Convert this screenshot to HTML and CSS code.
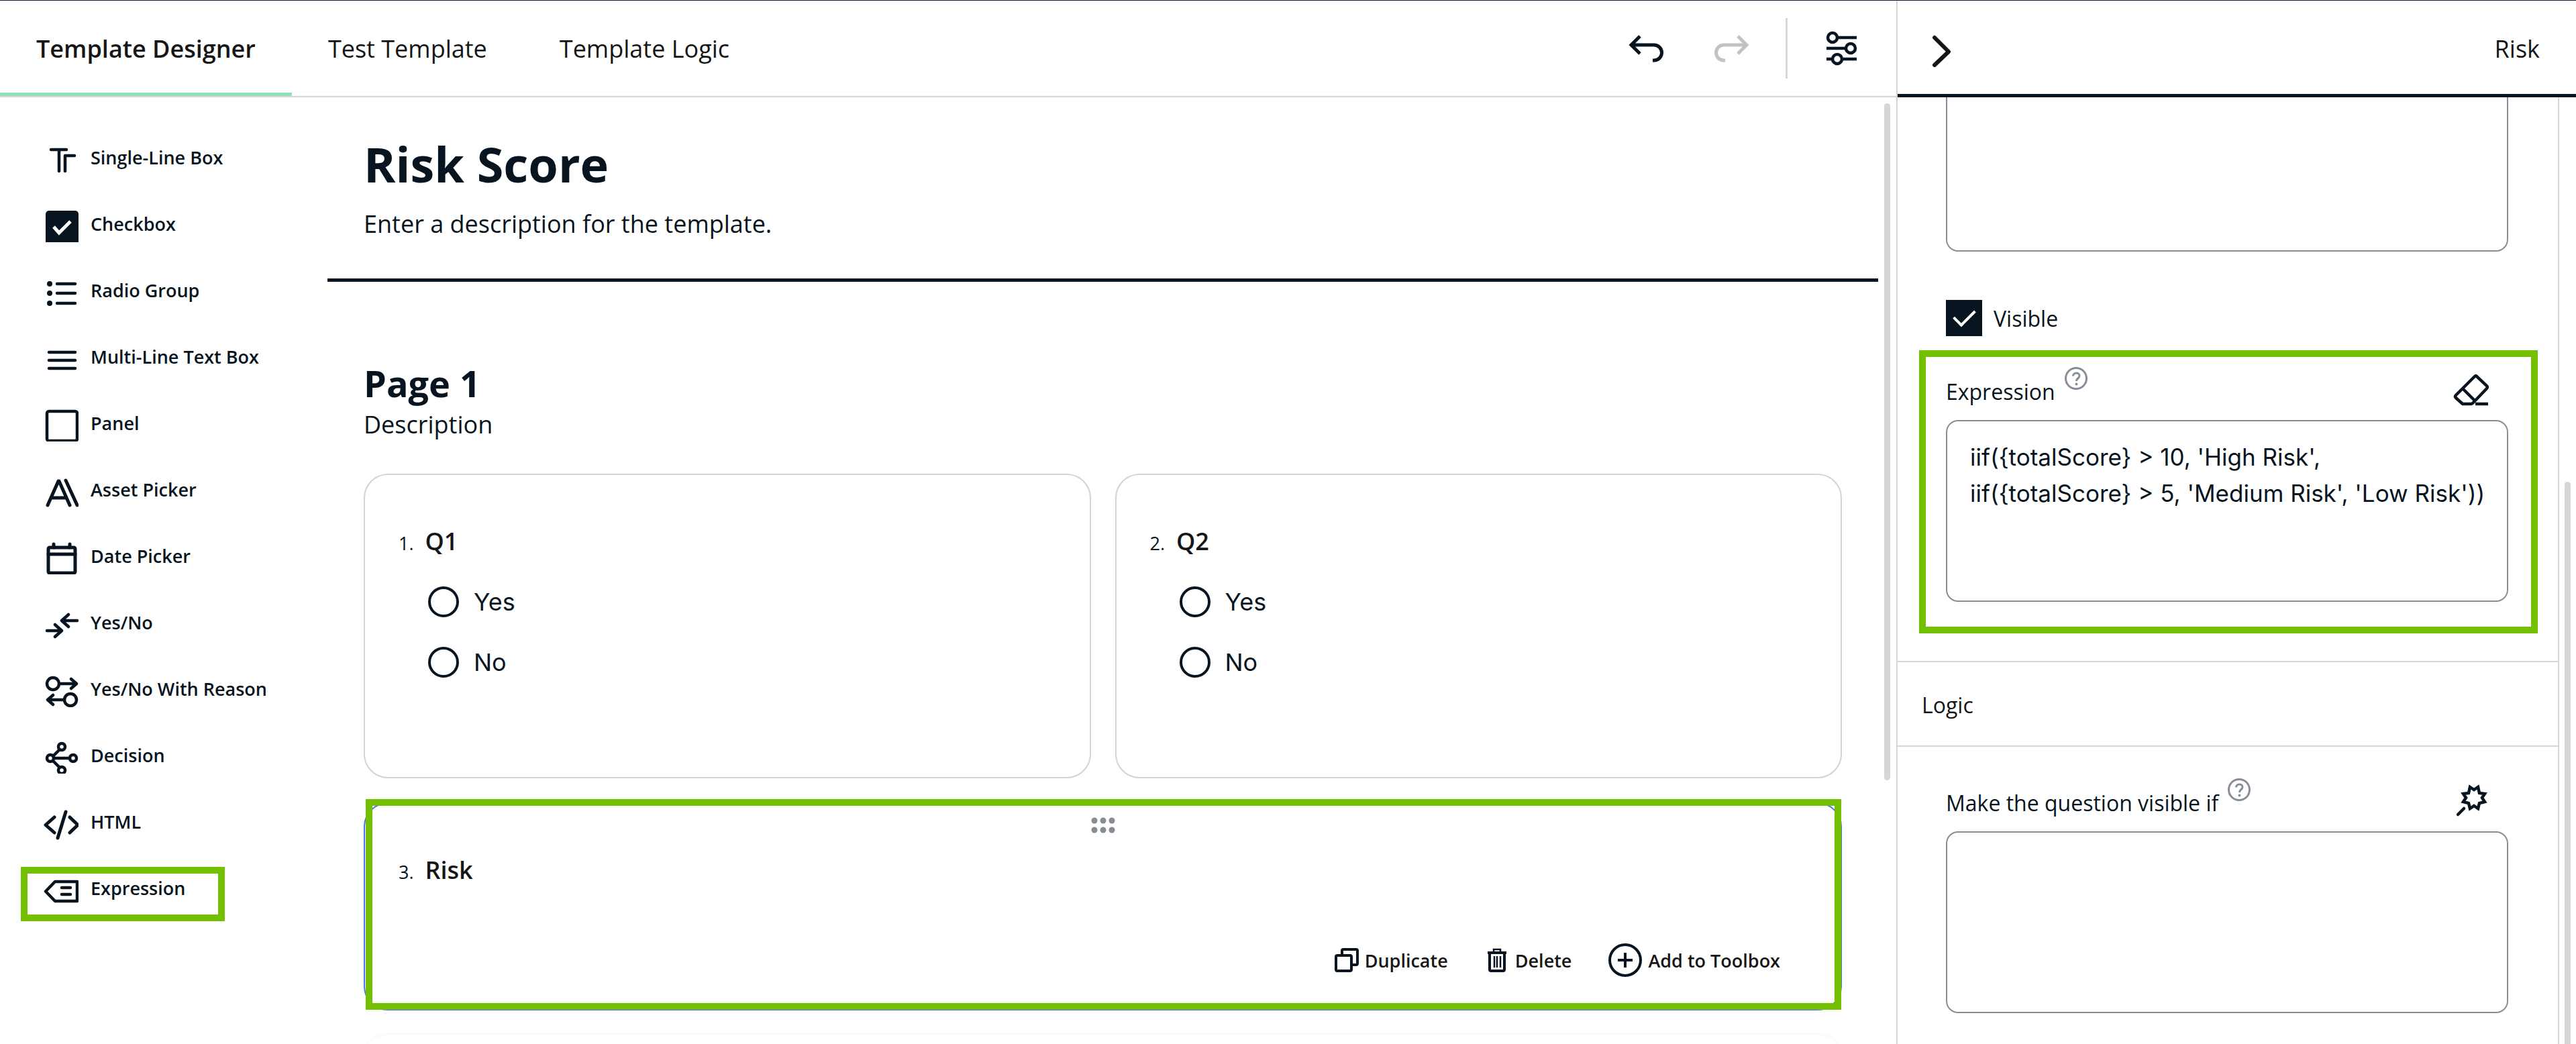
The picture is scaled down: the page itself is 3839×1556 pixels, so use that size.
FILE: index.html
```html
<!DOCTYPE html>
<html lang="en">
<head>
    <meta charset="UTF-8">
    <meta name="viewport" content="width=device-width, initial-scale=1.0">
    <title>Template Designer</title>
    <link rel="stylesheet" href="styles.css">
</head>
<body>
    <div class="designer">
        <header class="topbar">
            <nav class="tabs">
                <a class="tab active" href="#designer">Template Designer</a>
                <a class="tab" href="#test">Test Template</a>
                <a class="tab" href="#logic">Template Logic</a>
            </nav>
            <div class="tools">
                <button class="tool" aria-label="Undo">
                    <svg class="icon" viewBox="0 0 54 54"><path d="M17 9 4 22l13 13M4 22h34a11.5 11.5 0 0 1 0 23h-2" stroke-width="5"/></svg>
                </button>
                <button class="tool" aria-label="Redo" disabled>
                    <svg class="icon" viewBox="0 0 54 54"><path d="M37 9l13 13-13 13M50 22H16a11.5 11.5 0 0 0 0 23h2" stroke-width="5"/></svg>
                </button>
                <span class="divider"></span>
                <button class="tool" aria-label="Settings">
                    <svg class="icon" viewBox="0 0 54 54"><circle cx="13" cy="11" r="7"/><path d="M21 11h28M4 27h28M4 43h8M29 43h20"/><circle cx="40" cy="27" r="7"/><circle cx="20" cy="43" r="7"/></svg>
                </button>
            </div>
        </header>

        <div class="workspace">
            <aside class="toolbox">
                <button class="item">
                    <svg class="icon round" viewBox="0 0 54 54"><path d="M13 15h23M25 15v32M48 24H34v23"/></svg>
                    Single-Line Box
                </button>
                <button class="item">
                    <svg class="icon" viewBox="0 0 54 54"><rect class="solid" x="5" y="7" width="49" height="51" rx="5"/><path class="check" d="M17 31l8 9 17-17"/></svg>
                    Checkbox
                </button>
                <button class="item">
                    <svg class="icon round" viewBox="0 0 54 54"><path d="M22 17h27M22 31h27M22 46h27"/><circle class="solid" cx="11" cy="17" r="4"/><circle class="solid" cx="11" cy="31" r="4"/><circle class="solid" cx="11" cy="46" r="4"/></svg>
                    Radio Group
                </button>
                <button class="item">
                    <svg class="icon round" viewBox="0 0 54 54"><path d="M10 20h39M10 32h39M10 44h39"/></svg>
                    Multi-Line Text Box
                </button>
                <button class="item">
                    <svg class="icon" viewBox="0 0 54 54"><rect x="7" y="9" width="45" height="44" rx="3"/></svg>
                    Panel
                </button>
                <button class="item">
                    <svg class="icon round" viewBox="0 0 54 54"><path d="M8 50 24 14h1l16 36M15 39h20M35 13l17 37" stroke-width="5"/></svg>
                    Asset Picker
                </button>
                <button class="item">
                    <svg class="icon round" viewBox="0 0 54 54"><rect x="9" y="14" width="40" height="38" rx="2" stroke-width="5"/><path d="M9 24h40M17 9v5M41 9v5" stroke-width="5"/></svg>
                    Date Picker
                </button>
                <button class="item">
                    <svg class="icon round" viewBox="0 0 54 54"><path d="M52 24H29M39 15l-10 9 10 9M7 39h22M19 30l10 9-10 9"/></svg>
                    Yes/No
                </button>
                <button class="item">
                    <svg class="icon round" viewBox="0 0 54 54"><circle cx="16" cy="19" r="9"/><path d="M26 19h25M43 12l8 7-8 7M32 43H8M16 36l-8 7 8 7"/><circle cx="42" cy="43" r="9"/></svg>
                    Yes/No With Reason
                </button>
                <button class="item">
                    <svg class="icon round" viewBox="0 0 54 54"><circle cx="29" cy="14" r="5"/><circle cx="12" cy="31" r="5"/><circle cx="46" cy="31" r="5"/><circle cx="29" cy="49" r="5"/><path d="M16 28l9-9M17 31h24M16 35l9 9"/></svg>
                    Decision
                </button>
                <button class="item">
                    <svg class="icon round" viewBox="0 0 54 54"><path d="M18 20 5 31.500l13 11.500M41 20l12 11.500L41 43M35 12 23 51" stroke-width="5"/></svg>
                    HTML
                </button>
                <button class="item">
                    <svg class="icon round" viewBox="0 0 54 54"><path d="M5 31.500 19 17h33v29H19zM29 26h13M29 36h13"/></svg>
                    Expression
                    <span class="highlight highlight-item"></span>
                </button>
            </aside>

            <main class="canvas">
                <section class="template-head">
                    <h1>Risk Score</h1>
                    <p>Enter a description for the template.</p>
                </section>

                <section class="page">
                    <h2>Page 1</h2>
                    <p>Description</p>

                    <div class="questions">
                        <fieldset class="card">
                            <div class="question"><span class="number">1.</span>Q1</div>
                            <div class="choices">
                                <label class="choice"><input type="radio" name="q1">Yes</label>
                                <label class="choice"><input type="radio" name="q1">No</label>
                            </div>
                        </fieldset>
                        <fieldset class="card">
                            <div class="question"><span class="number">2.</span>Q2</div>
                            <div class="choices">
                                <label class="choice"><input type="radio" name="q2">Yes</label>
                                <label class="choice"><input type="radio" name="q2">No</label>
                            </div>
                        </fieldset>
                        <div class="card selected">
                            <svg class="drag" viewBox="0 0 36 24"><circle cx="5" cy="5" r="4.500"/><circle cx="18" cy="5" r="4.500"/><circle cx="31" cy="5" r="4.500"/><circle cx="5" cy="19" r="4.500"/><circle cx="18" cy="19" r="4.500"/><circle cx="31" cy="19" r="4.500"/></svg>
                            <div class="question"><span class="number">3.</span>Risk</div>
                            <div class="actions">
                                <button class="action">
                                    <svg class="icon small" viewBox="0 0 36 36"><rect x="2" y="11" width="23" height="23" rx="2"/><path d="M11 10V4q0-2 2-2h19q2 0 2 2v19q0 2-2 2h-6"/></svg>
                                    Duplicate
                                </button>
                                <button class="action">
                                    <svg class="icon small" viewBox="0 0 36 36"><path d="M4 7h28M7 8v24q0 2 2 2h18q2 0 2-2V8"/><path d="M13 6V2h10v4M14 12v17M18 12v17M23 12v17" stroke-width="2.500"/></svg>
                                    Delete
                                </button>
                                <button class="action">
                                    <svg class="icon medium" viewBox="0 0 50 50"><circle cx="25" cy="25" r="23"/><path d="M14 25h22M25 14v22"/></svg>
                                    Add to Toolbox
                                </button>
                            </div>
                            <span class="highlight highlight-card"></span>
                        </div>
                        <div class="card ghost"></div>
                    </div>
                </section>
            </main>
            <div class="scroll"><span class="thumb"></span></div>
        </div>
    </div>

    <aside class="properties">
        <header class="properties-head">
            <button class="tool" aria-label="Collapse">
                <svg class="icon round chevron" viewBox="0 0 54 54"><path d="M17 10l21 21-21 20" stroke-width="6"/></svg>
            </button>
            <span>Risk</span>
        </header>
        <div class="properties-body">
            <div class="fields">
                <div class="group">
                    <textarea class="cut" aria-label="Description"></textarea>
                    <label class="visible"><input type="checkbox" checked>Visible</label>
                </div>
                <div class="group expression">
                    <div class="field-head">
                        <label for="expression">Expression</label>
                        <svg class="help" viewBox="0 0 34 34"><circle cx="17" cy="17" r="15.500"/><path d="M12.500 13.500c0-6 9.500-6 9.500-.5 0 4-4.500 3.500-4.500 8"/><circle class="dot" cx="17.500" cy="25.500" r="2"/></svg>
                        <button class="tool" aria-label="Clear expression">
                            <svg class="icon" viewBox="0 0 54 54"><path d="M32 5q2-2 3 0l15 14q2 2 0 4L29 45l-2 1H14L4 37q-2-2 0-4zM15 24l16 16M33 46h19"/></svg>
                        </button>
                    </div>
                    <textarea id="expression">iif({totalScore} &gt; 10, 'High Risk',
iif({totalScore} &gt; 5, 'Medium Risk', 'Low Risk'))</textarea>
                    <span class="highlight highlight-field"></span>
                </div>
                <button class="section">Logic</button>
                <div class="group">
                    <div class="field-head">
                        <label for="visible-if">Make the question visible if</label>
                        <svg class="help" viewBox="0 0 34 34"><circle cx="17" cy="17" r="15.500"/><path d="M12.500 13.500c0-6 9.500-6 9.500-.5 0 4-4.500 3.500-4.500 8"/><circle class="dot" cx="17.500" cy="25.500" r="2"/></svg>
                        <button class="tool" aria-label="Edit condition">
                            <svg class="icon" viewBox="0 0 54 54"><path d="M25 4 31 8 37 4 39 13 47 14 43 20 47 26 39 28 37 36 31 32 25 36 23 28 15 26 19 20 15 14 23 13z"/><path d="M16 36 7 45" stroke-linecap="round"/></svg>
                        </button>
                    </div>
                    <textarea id="visible-if"></textarea>
                </div>
            </div>
            <div class="scroll side"><span class="thumb"></span></div>
        </div>
    </aside>
</body>
</html>
```

FILE: styles.css
```css
* {
    box-sizing: border-box;
}

body {
    display: grid;
    grid-template-columns: 2826fr 1013fr;
    height: 100vh;
    margin: 0;
    border-top: 1px solid #0f1b33;
    overflow: hidden;
    background: #fff;
    color: #081521;
    font-family: "Open Sans", sans-serif;
    font-size: 36px;
}

h1, h2, p {
    margin: 0;
}

button {
    padding: 0;
    border: none;
    background: none;
    color: inherit;
    font: inherit;
    cursor: pointer;
}

.icon {
    flex: none;
    width: 54px;
    height: 54px;
    fill: none;
    stroke: #081521;
    stroke-width: 4.5;
}

.icon.small {
    width: 36px;
    height: 36px;
    stroke-width: 4;
}

.icon.medium {
    width: 50px;
    height: 50px;
    stroke-width: 4;
}

.round {
    stroke-linecap: round;
    stroke-linejoin: round;
}

.solid {
    fill: #081521;
    stroke: none;
}

.check {
    stroke: #fff;
    stroke-width: 5;
}

.highlight {
    position: absolute;
    border: 10px solid #72c000;
    pointer-events: none;
}

/* Left side: tabs, toolbox, canvas */

.designer {
    display: flex;
    flex-direction: column;
    min-width: 0;
    min-height: 0;
}

.topbar {
    display: flex;
    justify-content: space-between;
    flex: none;
    height: 144px;
    border-bottom: 2px solid #d6d6d6;
}

.tabs {
    display: flex;
    gap: 108px;
    padding-left: 54px;
    color: #161616;
}

.tab {
    position: relative;
    color: inherit;
    line-height: 144px;
    text-decoration: none;
}

.tab.active {
    font-weight: 600;
}

.tab.active::after {
    content: "";
    position: absolute;
    right: -54px;
    bottom: 0;
    left: -54px;
    height: 5px;
    background: #93e0b5;
}

.tools {
    display: flex;
    align-items: center;
    gap: 72px;
    padding-right: 54px;
}

.tool {
    display: flex;
}

.tool:disabled {
    opacity: 0.25;
}

.divider {
    width: 3px;
    height: 90px;
    margin: 0 -18px;
    background: #d6d6d6;
}

.workspace {
    display: flex;
    flex: 1;
    min-height: 0;
}

.toolbox {
    flex: none;
    width: 488px;
    padding: 40px 0 0 63px;
}

.item {
    position: relative;
    display: flex;
    align-items: center;
    gap: 18px;
    width: 100%;
    height: 99px;
    font-size: 27px;
    font-weight: 600;
}

.highlight-item {
    top: 18px;
    right: 153px;
    bottom: 0;
    left: -32px;
}

.canvas {
    flex: 1;
    min-width: 0;
    overflow: hidden;
}

.template-head {
    padding: 50px 54px 54px;
    border-bottom: 5px solid #081521;
}

.template-head h1 {
    margin-bottom: 14px;
    font-size: 72px;
    line-height: 98px;
}

.template-head p {
    line-height: 54px;
}

.page {
    padding: 115px 54px 0;
}

.page h2 {
    font-size: 54px;
    line-height: 72px;
}

.page p {
    line-height: 52px;
}

.questions {
    display: grid;
    grid-template-columns: 1fr 1fr;
    gap: 36px;
    margin-top: 47px;
}

.card {
    position: relative;
    min-width: 0;
    margin: 0;
    padding: 72px 90px 126px 50px;
    border: 2px solid #d0d3d8;
    border-radius: 36px;
}

.question {
    display: flex;
    align-items: baseline;
    gap: 17px;
    color: #161616;
    font-weight: 600;
    line-height: 54px;
}

.number {
    color: #081521;
    font-size: 27px;
    font-weight: 400;
}

.choices {
    padding: 15px 0 0 44px;
}

.choice {
    display: flex;
    align-items: center;
    gap: 22px;
    height: 90px;
    font-family: Inter, sans-serif;
}

.choice input {
    appearance: none;
    width: 46px;
    height: 46px;
    margin: 0;
    border: 4px solid #081521;
    border-radius: 50%;
}

.card.selected {
    grid-column: 1 / -1;
    padding-bottom: 48px;
    border-color: #4d6ff5;
}

.drag {
    position: absolute;
    top: 20px;
    left: calc(50% - 18px);
    width: 36px;
    height: 24px;
    fill: #858c94;
}

.actions {
    display: flex;
    justify-content: flex-end;
    gap: 55px;
    margin-top: 79px;
    color: #161616;
    font-size: 27px;
    font-weight: 600;
}

.action {
    display: flex;
    align-items: center;
    gap: 9px;
    height: 50px;
}

.highlight-card {
    inset: -7px -1px -1px 1px;
}

.card.ghost {
    grid-column: 1 / -1;
    border: none;
    box-shadow: 0 0 5px rgba(0, 0, 0, 0.06);
}

.scroll {
    flex: none;
    width: 27px;
    padding: 9px 9px 0;
}

.thumb {
    display: block;
    height: 72%;
    border-radius: 5px;
    background: #d6d6d6;
}

/* Right side: question properties */

.properties {
    display: flex;
    flex-direction: column;
    min-width: 0;
    min-height: 0;
    border-left: 2px solid #d6d6d6;
}

.properties-head {
    display: flex;
    align-items: center;
    justify-content: space-between;
    flex: none;
    height: 144px;
    padding: 4px 54px 0 38px;
    border-bottom: 5px solid #081521;
    color: #161616;
}

.chevron {
    stroke: #161616;
}

.properties-body {
    display: flex;
    flex: 1;
    min-height: 0;
}

.fields {
    flex: 1;
    min-width: 0;
    overflow: hidden;
    border-right: 2px solid #d6d6d6;
    font-size: 32px;
}

.group {
    position: relative;
    padding: 0 74px 0 72px;
}

textarea {
    display: block;
    width: 100%;
    height: 271px;
    padding: 26px 20px 26px 34px;
    border: 2px solid #868f98;
    border-radius: 18px;
    background: #fff;
    color: #081521;
    font: 35px/54px Inter, sans-serif;
    white-space: pre;
    overflow: hidden;
    resize: none;
}

/* scrolled halfway under the panel header */
textarea.cut {
    height: 230px;
    border-top: none;
    border-radius: 0 0 18px 18px;
}

.visible {
    display: flex;
    align-items: center;
    gap: 17px;
    margin: 72px 0 39px;
}

.visible input {
    appearance: none;
    display: grid;
    place-items: center;
    width: 54px;
    height: 54px;
    margin: 0;
    background: #081521;
}

.visible input:checked::before {
    content: "";
    width: 27px;
    height: 14px;
    margin-top: -8px;
    border: solid #fff;
    border-width: 0 0 4px 4px;
    transform: rotate(-45deg);
}

.expression {
    margin-bottom: 88px;
}

.field-head {
    display: flex;
    align-items: center;
    height: 86px;
    padding-right: 28px;
}

.field-head .tool {
    margin-left: auto;
}

.help {
    align-self: flex-start;
    width: 34px;
    height: 34px;
    margin: 7px 0 0 14px;
    fill: none;
    stroke: #868f98;
    stroke-width: 3;
}

.help .dot {
    fill: #868f98;
    stroke: none;
}

.highlight-field {
    inset: -18px 30px -47px 32px;
}

.section {
    display: block;
    width: 100%;
    height: 128px;
    margin-bottom: 40px;
    padding: 2px 36px 0;
    border: solid #d6d6d6;
    border-width: 2px 0;
    color: #161616;
    text-align: left;
}

.scroll.side {
    width: 25px;
    padding: 573px 8px 0;
}

.side .thumb {
    height: 100%;
    border-radius: 5px 5px 0 0;
}
```
